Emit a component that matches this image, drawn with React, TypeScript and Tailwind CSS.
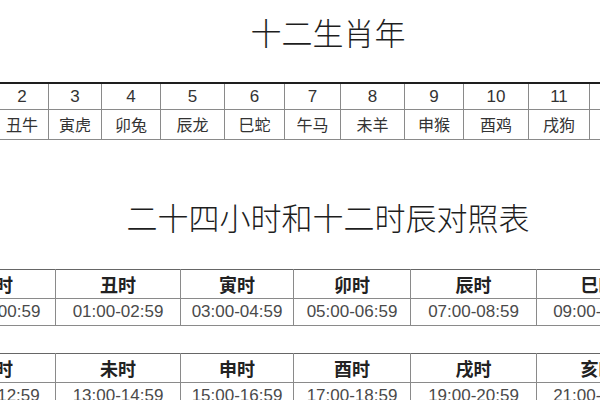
import React from 'react';

const zodiac = [
  { n: 2, name: '丑牛', w: 'w-[53px]' },
  { n: 3, name: '寅虎', w: 'w-[53px]' },
  { n: 4, name: '卯兔', w: 'w-[59px]' },
  { n: 5, name: '辰龙', w: 'w-[64px]' },
  { n: 6, name: '巳蛇', w: 'w-[60px]' },
  { n: 7, name: '午马', w: 'w-[56px]' },
  { n: 8, name: '未羊', w: 'w-[64px]' },
  { n: 9, name: '申猴', w: 'w-[59px]' },
  { n: 10, name: '酉鸡', w: 'w-[65px]' },
  { n: 11, name: '戌狗', w: 'w-[61px]' },
  { n: 12, name: '亥猪', w: 'w-[60px]' },
];

const hourWidths = ['w-[121px]', 'w-[125px]', 'w-[113px]', 'w-[117px]', 'w-[126px]', 'w-[124px]'];

const hoursAm = [
  ['子时', '23:00-00:59'],
  ['丑时', '01:00-02:59'],
  ['寅时', '03:00-04:59'],
  ['卯时', '05:00-06:59'],
  ['辰时', '07:00-08:59'],
  ['巳时', '09:00-10:59'],
];

const hoursPm = [
  ['午时', '11:00-12:59'],
  ['未时', '13:00-14:59'],
  ['申时', '15:00-16:59'],
  ['酉时', '17:00-18:59'],
  ['戌时', '19:00-20:59'],
  ['亥时', '21:00-22:59'],
];

const cjk = "font-['Noto_Sans_CJK_SC',sans-serif]";
const latin = "font-['Liberation_Sans','Noto_Sans_CJK_SC',sans-serif]";

// the page is wider than the window; both tables run off the left and right edges
const HourTable: React.FC<{ rows: string[][]; className?: string }> = ({ rows, className }) => (
  <table className={`w-[726px] max-w-none shrink-0 self-start table-fixed border-collapse -ml-[66px] ${className ?? ''}`}>
    <tbody>
      <tr className="h-[29px]">
        {rows.map(([name], i) => (
          <td
            key={name}
            className={`${hourWidths[i]} p-0 whitespace-nowrap border border-[#8a8a8a] border-t-[#666] text-center text-[18px] font-bold leading-none text-[#222] ${cjk}`}
          >
            {name}
          </td>
        ))}
      </tr>
      <tr className="h-[27px]">
        {rows.map(([name, time]) => (
          <td
            key={name}
            className={`p-0 whitespace-nowrap border border-[#8a8a8a] text-center text-[17px] leading-none text-[#4a4a4a] ${latin}`}
          >
            {time}
          </td>
        ))}
      </tr>
    </tbody>
  </table>
);

const App: React.FC = () => {
  return (
    <div className="w-[600px] h-[400px] overflow-hidden bg-white flex flex-col">
      {/* 十二生肖年 */}
      <h1 className={`mt-[16px] pl-[56px] text-center text-[31px] leading-[31px] font-light text-[#1e1e1e] ${cjk}`}>
        十二生肖年
      </h1>

      <table className="w-[654px] max-w-none mt-[35px] -ml-[5px] self-start table-fixed border-collapse shrink-0">
        <tbody>
          <tr className="h-[26px]">
            {zodiac.map((z) => (
              <td
                key={z.n}
                className={`${z.w} p-0 border border-[#8a8a8a] border-t-2 border-t-[#1e1e1e] text-center text-[17px] leading-none text-[#333] ${latin}`}
              >
                {z.n}
              </td>
            ))}
          </tr>
          <tr className="h-[30px]">
            {zodiac.map((z) => (
              <td
                key={z.n}
                className={`p-0 whitespace-nowrap border border-[#8a8a8a] text-center text-[16px] leading-none text-[#333] ${cjk}`}
              >
                {z.name}
              </td>
            ))}
          </tr>
        </tbody>
      </table>

      {/* 二十四小时和十二时辰对照表 */}
      <h2 className={`mt-[61px] pl-[56px] text-center text-[31px] leading-[31px] font-light text-[#1e1e1e] whitespace-nowrap ${cjk}`}>
        二十四小时和十二时辰对照表
      </h2>

      <HourTable rows={hoursAm} className="mt-[37px]" />
      <HourTable rows={hoursPm} className="mt-[27px]" />
    </div>
  );
};

export default App;
